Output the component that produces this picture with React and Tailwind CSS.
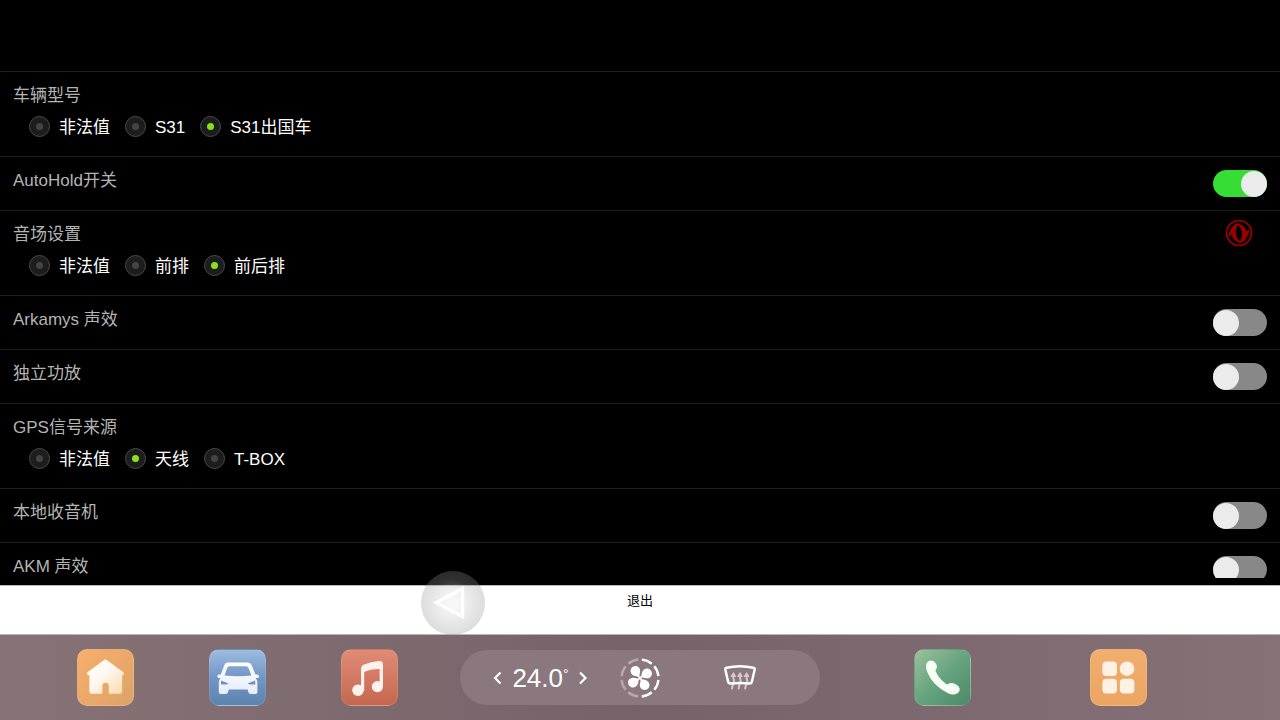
import { useState } from "react";

const SETTINGS = [
  { id: "model", title: "车辆型号", options: ["非法值", "S31", "S31出国车"], value: "S31出国车" },
  { id: "autohold", title: "AutoHold开关", value: true },
  { id: "sound", title: "音场设置", options: ["非法值", "前排", "前后排"], value: "前后排" },
  { id: "arkamys", title: "Arkamys 声效", value: false },
  { id: "amp", title: "独立功放", value: false },
  { id: "gps", title: "GPS信号来源", options: ["非法值", "天线", "T-BOX"], value: "天线" },
  { id: "radio", title: "本地收音机", value: false },
  { id: "akm", title: "AKM 声效", value: false },
];

function RadioRow({ item, value, onChange }) {
  return (
    <div
      role="radiogroup"
      aria-labelledby={`${item.id}-title`}
      className="h-[85px] border-t border-[#1c1c1c] pt-[11px]"
    >
      <p id={`${item.id}-title`} className="px-[13px] leading-[26px] text-[#b4b4b4]">
        {item.title}
      </p>
      <div className="mt-[7px] flex gap-[15px] pl-[29px]">
        {item.options.map((option) => (
          <label key={option} className="flex items-start gap-[9px] leading-[23px] whitespace-nowrap text-white">
            <input
              type="radio"
              name={item.id}
              checked={value === option}
              onChange={() => onChange(option)}
              className="flex size-[21px] appearance-none items-center justify-center rounded-full border border-[#4a4a4a] bg-[#1d1d1d] before:size-[7px] before:rounded-full before:bg-[#444444] before:content-[''] checked:before:bg-[#8ae01c]"
            />
            {option}
          </label>
        ))}
      </div>
    </div>
  );
}

function SwitchRow({ item, value, onChange }) {
  return (
    <div className="flex h-[54px] items-start justify-between border-t border-[#1c1c1c] px-[13px]">
      <label htmlFor={item.id} className="pt-[11px] leading-[26px] text-[#b4b4b4]">
        {item.title}
      </label>
      <input
        id={item.id}
        type="checkbox"
        role="switch"
        checked={value}
        onChange={(e) => onChange(e.target.checked)}
        className="mt-[13px] flex h-[27px] w-[54px] shrink-0 appearance-none items-center rounded-full bg-[#888888] before:size-[26px] before:rounded-full before:bg-[#ebebeb] before:content-[''] checked:justify-end checked:bg-[#35dd35]"
      />
    </div>
  );
}

function BrandLogo() {
  return (
    <svg viewBox="0 0 28 28" className="absolute top-[219px] right-[27px] size-7" fill="none">
      <circle cx="14" cy="14" r="12.4" stroke="#960000" strokeWidth="1.8" />
      <g fill="#960000">
        <path d="M14.4 4.2C10 4.4 7.6 6.8 6.4 9.6C4.6 11.6 3.8 14.4 4 17.8L6.6 15.8C7.6 20.4 11.6 23.8 17.6 23.6C13.4 21.8 10.9 18 10.9 13.4C10.9 9.6 12 6.4 14.4 4.2Z" />
        <path d="M13.6 23.8C18 23.6 20.4 21.2 21.6 18.4C23.4 16.4 24.2 13.6 24 10.2L21.4 12.2C20.4 7.6 16.4 4.2 10.4 4.4C14.6 6.2 17.1 10 17.1 14.6C17.1 18.4 16 21.6 13.6 23.8Z" />
      </g>
    </svg>
  );
}

/* DOCK ICONS */

function HomeIcon() {
  return (
    <svg viewBox="1 1 55 55" className="size-full">
      <defs>
        <linearGradient id="home-fill" x1="0" y1="0" x2="1" y2="1">
          <stop offset="0.4" stopColor="#fffaf3" />
          <stop offset="1" stopColor="#fbd9ae" />
        </linearGradient>
      </defs>
      <path
        d="M26.4 11.4Q28.4 9.8 30.4 11.4L46.4 23.2Q48 26 45.2 26.2V42.4Q45.2 44.8 42.8 44.8H32.8Q31.8 44.8 31.8 43.8V37Q31.8 33.8 28.6 33.8Q25.4 33.8 25.4 37V43.8Q25.4 44.8 24.4 44.8H14.8Q12.4 44.8 12.4 42.4V26.2Q9 26 10.4 23.2Z"
        fill="url(#home-fill)"
      />
    </svg>
  );
}

function CarIcon() {
  return (
    <svg viewBox="1 1 55 55" className="size-full">
      <defs>
        <linearGradient id="car-fill" x1="0" y1="0" x2="0" y2="1">
          <stop offset="0" stopColor="#ffffff" />
          <stop offset="1" stopColor="#e6ecfb" />
        </linearGradient>
      </defs>
      <path
        fillRule="evenodd"
        fill="url(#car-fill)"
        d="M18.4 13.6H38.8Q41.6 13.8 42.8 16.6L46.4 25.6H48.4Q50.2 25.8 50 27.8L49.4 28.8L46.8 29.2Q48.4 31.4 48.4 34V43.2Q48.4 45 46.6 45H41.6Q39.8 45 39.4 43.2L38.6 40.4H19.8L19 43.2Q18.6 45 16.8 45H11.6Q9.8 45 9.8 43.2V34Q9.8 31.4 11.4 29.2L8.8 28.8Q7.4 26 9.8 25.6H11.8L15.2 16.6Q16 13.8 18.4 13.6ZM20.4 17.2Q18.8 17.4 18.2 18.8L15.6 26.6Q29 27.8 42.4 26.6L39.4 18.8Q38.8 17.4 37.2 17.2ZM12 31.4V35.4H17.4L19.6 34.4ZM46.2 31.4V35.4H40.8L38.6 34.4Z"
      />
    </svg>
  );
}

function MusicIcon() {
  return (
    <svg viewBox="1 1 55 55" className="size-full" fill="#fff1ee">
      <circle cx="17" cy="41.2" r="5.8" />
      <circle cx="36.4" cy="37.6" r="5.6" />
      <path d="M20 19.5Q20.2 16.6 23 15.6Q30 12.6 38 12Q42 11.8 42 15.4V37.6H38.6V20Q30 19.8 23.2 23V41.2H20Z" />
    </svg>
  );
}

function PhoneIcon() {
  return (
    <svg viewBox="1 1 55 55" className="size-full">
      <path
        d="M14 12.4Q17 10.4 20 12.6Q23.4 15.4 22.8 18.6Q22.2 20.6 21.4 21.8Q24.6 29.6 32.8 35.6Q36 33.4 39.4 34.2Q44.6 36 45.6 39.4Q46.2 42.4 43.4 44.2Q39.6 46.6 34.6 44.4Q17.6 36.6 12.4 20.6Q11.2 14.8 14 12.4Z"
        fill="#f5fff5"
      />
    </svg>
  );
}

function AppsIcon() {
  return (
    <svg viewBox="1 1 55 55" className="size-full" fill="#fff1e3">
      <rect x="12.4" y="12.4" width="14.6" height="14.6" rx="4" />
      <circle cx="37" cy="19.7" r="7.3" />
      <rect x="12.4" y="29.8" width="14.6" height="14.6" rx="4" />
      <rect x="29.8" y="29.8" width="14.6" height="14.6" rx="4" />
    </svg>
  );
}

function FanIcon() {
  return (
    <svg viewBox="0 0 40 40" className="size-10" fill="none">
      {[0, 45, 90, 135, 180, 225, 270, 315].map((angle) => (
        <path
          key={angle}
          d="M21.8 1.6A18.5 18.5 0 0 1 31.8 5.7"
          stroke={angle < 180 ? "#ffffff" : "#b5a9ad"}
          strokeWidth="2.4"
          transform={`rotate(${angle} 20 20)`}
        />
      ))}
      {[0, 90, 180, 270].map((angle) => (
        <path
          key={angle}
          d="M19.6 19.4C17.6 18.2 15.4 18.6 13.4 17.6C10.8 16.2 9.8 13.4 11 10.8C12.2 8.4 15 7.4 17.4 8.4C20.2 9.8 20.6 12.6 19.9 14.8Q19.2 17 19.6 19.4Z"
          fill="#ffffff"
          transform={`rotate(${angle} 20 20)`}
        />
      ))}
      <circle cx="20" cy="20" r="1.8" fill="#ffffff" />
    </svg>
  );
}

function DefrostIcon() {
  return (
    <svg viewBox="0 0 40 40" className="size-10" fill="none" strokeLinecap="round" strokeLinejoin="round">
      {[13.4, 20, 26.6].map((x) => (
        <g key={x} stroke="#d3cacd">
          <path d={`M${x} 17V20Q${x + 1.4} 23 ${x} 25.4Q${x - 1} 27.6 ${x - 1.4} 30.6`} strokeWidth="2" />
          <path d={`M${x - 2} 18.4L${x} 15L${x + 2} 18.4Z`} fill="#d3cacd" strokeWidth="1.4" />
        </g>
      ))}
      <path
        d="M6.6 9.8Q19.8 6.6 33.4 9.8Q35 10.2 34.6 12L31.8 24Q31.2 25.8 29.4 25.6Q20 24.6 10.6 25.6Q8.8 25.8 8.2 24L5.4 12Q5 10.2 6.6 9.8Z"
        stroke="#ffffff"
        strokeWidth="2.5"
      />
    </svg>
  );
}

function DockButton({ label, tint, children }) {
  return (
    <button
      aria-label={label}
      className={`size-[57px] shrink-0 rounded-[10px] border border-white/10 ${tint}`}
    >
      {children}
    </button>
  );
}

function Dock() {
  const [temp, setTemp] = useState(24);

  return (
    <nav className="grid h-[85px] shrink-0 grid-cols-[1fr_360px_1fr] items-center bg-linear-to-r from-[#877375] via-[#76636a] to-[#857176]">
      <div className="flex gap-[75px] pl-[77px]">
        <DockButton label="主页" tint="bg-linear-to-br from-[#f7ae6c] to-[#dda368]">
          <HomeIcon />
        </DockButton>
        <DockButton label="车辆" tint="bg-linear-to-b from-[#9dbcdf] via-[#7395c8] to-[#5c84ab]">
          <CarIcon />
        </DockButton>
        <DockButton label="音乐" tint="bg-linear-to-b from-[#df8b76] to-[#c5674f]">
          <MusicIcon />
        </DockButton>
      </div>

      {/* CLIMATE */}
      <div className="flex h-[55px] items-center rounded-full bg-[#8a787e] pl-7 text-white">
        <button aria-label="降低温度" className="flex h-10 w-5 items-center justify-center" onClick={() => setTemp(temp - 0.5)}>
          <svg viewBox="0 0 20 20" className="size-5" fill="none" stroke="currentColor" strokeWidth="2.2">
            <path d="M12.5 4.5L7 10L12.5 15.5" />
          </svg>
        </button>
        <p className="flex w-[65px] justify-center text-[26px] leading-8">
          {temp.toFixed(1)}
          <span className="text-sm leading-6">°</span>
        </p>
        <button aria-label="升高温度" className="flex h-10 w-5 items-center justify-center" onClick={() => setTemp(temp + 0.5)}>
          <svg viewBox="0 0 20 20" className="size-5" fill="none" stroke="currentColor" strokeWidth="2.2">
            <path d="M7 4.5L12.5 10L7 15.5" />
          </svg>
        </button>
        <button aria-label="风量" className="ml-[27px]">
          <FanIcon />
        </button>
        <button aria-label="除霜" className="ml-[60px]">
          <DefrostIcon />
        </button>
      </div>

      <div className="flex gap-[119px] pl-[94px]">
        <DockButton label="电话" tint="bg-linear-to-br from-[#9cc19c] via-[#66a37f] to-[#4c8968]">
          <PhoneIcon />
        </DockButton>
        <DockButton label="应用" tint="bg-linear-to-b from-[#f0ae70] to-[#eda561]">
          <AppsIcon />
        </DockButton>
      </div>
    </nav>
  );
}

export default function App() {
  const [values, setValues] = useState(
    Object.fromEntries(SETTINGS.map((item) => [item.id, item.value]))
  );

  function update(id, value) {
    setValues({ ...values, [id]: value });
  }

  return (
    <div className="relative flex h-screen flex-col bg-black font-['Liberation_Sans','Noto_Sans_CJK_SC',sans-serif] text-[17px]">
      {/* SETTINGS LIST */}
      <main className="mb-[7px] min-h-0 flex-1 overflow-hidden pt-[71px]">
        {SETTINGS.map((item) => {
          const Row = item.options ? RadioRow : SwitchRow;
          return (
            <Row
              key={item.id}
              item={item}
              value={values[item.id]}
              onChange={(value) => update(item.id, value)}
            />
          );
        })}
      </main>

      {/* EXIT + BACK */}
      <div className="relative shrink-0">
        <button className="flex h-[50px] w-full justify-center border-y border-[#b9b5b5] bg-white pt-[5px] text-[13px] leading-5 text-black">
          退出
        </button>
        <button
          aria-label="返回"
          className="absolute -top-[14px] left-[421px] size-16 rounded-full bg-radial from-[#f0f0f0]/50 from-10% via-[#a8a8a8]/30 via-50% to-[#888888]/30 to-75%"
        >
          <svg viewBox="0 0 64 64" className="size-full" fill="none">
            <path d="M15.5 31.5L41.5 17.5V45.5Z" stroke="#ffffff" strokeOpacity="0.9" strokeWidth="3.4" />
          </svg>
        </button>
      </div>

      <Dock />
      <BrandLogo />
    </div>
  );
}
